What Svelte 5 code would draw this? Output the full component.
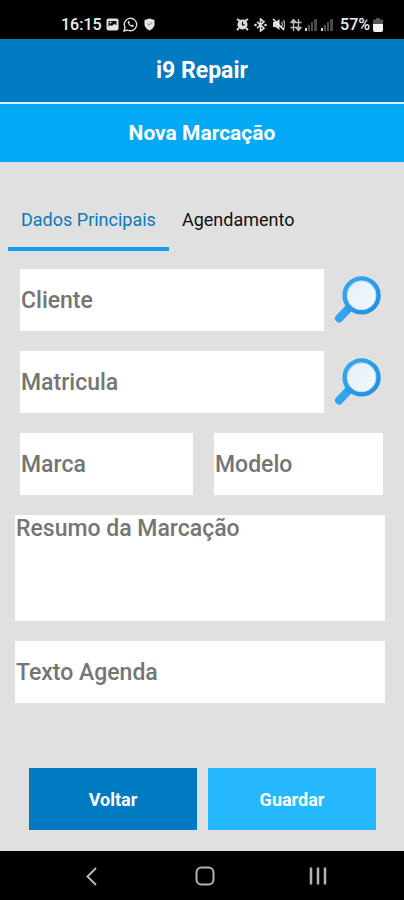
<script>
  const tabs = ['Dados Principais', 'Agendamento'];

  let activeTab = $state(0);
  let form = $state({
    cliente: '',
    matricula: '',
    marca: '',
    modelo: '',
    resumo: '',
    agenda: ''
  });
</script>

{#snippet magnifier()}
  <svg viewBox="0 0 48 48" aria-hidden="true">
    <defs>
      <linearGradient id="rim" x1="0" y1="0" x2="1" y2="1">
        <stop offset="0" stop-color="#37a8ee" />
        <stop offset="1" stop-color="#1f8fe0" />
      </linearGradient>
      <linearGradient id="lens" x1="0" y1="0" x2="1" y2="1">
        <stop offset="0" stop-color="#e2edf9" />
        <stop offset="1" stop-color="#f5f9fe" />
      </linearGradient>
    </defs>
    <path d="M15 31 L5 41.5" stroke="#36a3f0" stroke-width="8" stroke-linecap="round" />
    <path d="M17 29 L13 33" stroke="#2490e2" stroke-width="7" />
    <circle cx="27" cy="19" r="16.500" fill="url(#lens)" stroke="url(#rim)" stroke-width="4.500" />
    <circle cx="27" cy="19" r="14" fill="none" stroke="#b9daf5" stroke-width="1" />
  </svg>
{/snippet}

<div class="screen">
  <div class="status-bar">
    <div class="status-group">
      <span class="clock">16:15</span>
      <svg width="13" height="13" viewBox="0 0 13 13">
        <rect x="0.5" y="0.5" width="12" height="12" rx="2" fill="#e4e4e4" />
        <path d="M2.5 3h8v4L8 6 6 8 4 7 2.5 9z" fill="#111" />
        <circle cx="4.5" cy="4.5" r="1" fill="#e4e4e4" />
      </svg>
      <svg width="15" height="15" viewBox="0 0 15 15">
        <path d="M1 14l1-3.6A6.2 6.2 0 1 1 4.600 13z" fill="none" stroke="#ddd" stroke-width="1.400" />
        <path d="M5 4.200c-1.400 1.800 2.600 6.600 5.400 5.600l.4-1.500-1.700-.8-.8.8c-1-.4-1.700-1.200-2-2l.6-.8-.7-1.600z" fill="#ddd" />
      </svg>
      <svg class="spaced" width="11" height="13" viewBox="0 0 11 13">
        <path d="M5.500 0.500L10.500 2v4.500c0 2.500-2.500 4.800-5 6-2.500-1.200-5-3.500-5-6V2z" fill="#e4e4e4" />
        <path d="M3.500 5.500l1.700 1.700 3-3.200" fill="none" stroke="#777" stroke-width="1" />
      </svg>
    </div>
    <div class="status-group">
      <svg width="13" height="13" viewBox="0 0 13 13">
        <path d="M1 1l3 2M12 1L9 3M1 12l2-2M12 12l-2-2" stroke="#ddd" stroke-width="2" />
        <circle cx="6.500" cy="6.500" r="5" fill="#ddd" />
        <path d="M6.500 3.800v3h2.300" fill="none" stroke="#111" stroke-width="1.200" />
      </svg>
      <svg class="spaced" width="13" height="14" viewBox="0 0 13 14">
        <path d="M3 3.800l7 6.400L6.500 13V1L10 3.800 3 10.200" fill="none" stroke="#ddd" stroke-width="1.600" />
        <circle cx="1.500" cy="7" r="1.300" fill="#ddd" />
        <circle cx="11.500" cy="7" r="1.300" fill="#ddd" />
      </svg>
      <svg class="spaced" width="13" height="13" viewBox="0 0 13 13">
        <path d="M1 4h2.500L7.500 1v11L3.500 9H1z" fill="#ddd" />
        <path d="M9.500 4c1 1.500 1 3.500 0 5M11.500 2c1.300 2.500 1.300 6.500 0 9" fill="none" stroke="#aaa" stroke-width="1.400" />
        <path d="M1 1l11 11" stroke="#eee" stroke-width="1.600" />
      </svg>
      <svg class="spaced" width="12" height="14" viewBox="0 0 12 14">
        <path d="M3.500 13V2M8.500 1v11M1.200 4l2.300-2.500L5.800 4M6.200 10l2.300 2.500 2.300-2.500M0.500 4.500h11M0.500 9.500h11" fill="none" stroke="#bbb" stroke-width="1.300" />
      </svg>
      {#each [0, 1] as sim (sim)}
        <svg width="13" height="13" viewBox="0 0 13 13">
          <rect x="0" y="10" width="2" height="3" fill="#ddd" />
          <rect x="3" y="7" width="2" height="6" fill="#555" />
          <rect x="6" y="4" width="2" height="9" fill="#4d4d4d" />
          <rect x="9" y="1" width="3" height="12" fill="#484848" />
        </svg>
      {/each}
      <span class="battery">57%</span>
      <svg width="10" height="14" viewBox="0 0 10 14">
        <path d="M3 0h4v1.500h3V7H0V1.500h3z" fill="#555" />
        <path d="M0 6h10v6a2 2 0 0 1-2 2H2a2 2 0 0 1-2-2z" fill="#f4f4f4" />
      </svg>
    </div>
  </div>

  <header class="app-bar">
    <h1>i9 Repair</h1>
  </header>
  <div class="title-bar">
    <h2>Nova Marcação</h2>
  </div>

  <main>
    <div class="tabs" role="tablist">
      {#each tabs as tab, i (tab)}
        <button
          class="tab"
          class:active={activeTab === i}
          role="tab"
          aria-selected={activeTab === i}
          onclick={() => (activeTab = i)}
        >
          {tab}
        </button>
      {/each}
    </div>

    <form onsubmit={(e) => e.preventDefault()}>
      <div class="row search-row">
        <input type="text" placeholder="Cliente" aria-label="Cliente" bind:value={form.cliente} />
        <button type="button" class="search" aria-label="Procurar cliente">{@render magnifier()}</button>
      </div>
      <div class="row search-row">
        <input type="text" placeholder="Matricula" aria-label="Matricula" bind:value={form.matricula} />
        <button type="button" class="search" aria-label="Procurar matricula">{@render magnifier()}</button>
      </div>
      <div class="row pair">
        <input type="text" placeholder="Marca" aria-label="Marca" bind:value={form.marca} />
        <input type="text" placeholder="Modelo" aria-label="Modelo" bind:value={form.modelo} />
      </div>
      <textarea placeholder="Resumo da Marcação" aria-label="Resumo da Marcação" bind:value={form.resumo}></textarea>
      <input type="text" placeholder="Texto Agenda" aria-label="Texto Agenda" bind:value={form.agenda} />

      <div class="actions">
        <button type="button" class="btn back">Voltar</button>
        <button type="submit" class="btn save">Guardar</button>
      </div>
    </form>
  </main>

  <nav class="nav-bar">
    <button aria-label="Voltar atrás">
      <svg width="20" height="20" viewBox="0 0 20 20">
        <path d="M14 2L5.500 10.500 14 19" fill="none" stroke="#b4b4b4" stroke-width="2" />
      </svg>
    </button>
    <button aria-label="Início">
      <svg width="20" height="20" viewBox="0 0 20 20">
        <rect x="1.500" y="1.500" width="17" height="17" rx="5" fill="none" stroke="#b4b4b4" stroke-width="2" />
      </svg>
    </button>
    <button aria-label="Recentes">
      <svg width="20" height="20" viewBox="0 0 20 20">
        <path d="M3 1.500v17M10 1.500v17M17 1.500v17" stroke="#b4b4b4" stroke-width="2.500" />
      </svg>
    </button>
  </nav>
</div>

<style>
  :global(body) {
    margin: 0;
    background: #e0e0e0;
  }

  .screen {
    display: flex;
    flex-direction: column;
    min-height: 100vh;
    background: #e0e0e0;
    font-family: Roboto, 'Noto Sans', sans-serif;
  }

  button,
  input,
  textarea {
    box-sizing: border-box;
    margin: 0;
    border: 0;
    border-radius: 0;
    font-family: inherit;
  }

  button {
    padding: 0;
    background: none;
    cursor: pointer;
  }

  svg {
    display: block;
    flex: none;
  }

  .status-bar {
    display: flex;
    align-items: center;
    justify-content: space-between;
    height: 39px;
    padding: 10px 21px 0 61px;
    box-sizing: border-box;
    background: #000;
    color: #eee;
    font-size: 16px;
    font-weight: 500;
    line-height: 20px;
  }

  .status-group {
    display: flex;
    align-items: center;
    gap: 4px;
  }

  .status-group:last-child {
    gap: 3px;
  }

  .spaced {
    margin-left: 2px;
  }

  .battery {
    margin-left: 3px;
  }

  .app-bar,
  .title-bar {
    display: flex;
    align-items: center;
    justify-content: center;
    color: #fff;
  }

  .app-bar {
    height: 63px;
    background: #007ac1;
    border-bottom: 2px solid #d9effb;
  }

  .title-bar {
    height: 58px;
    background: #03a9f4;
  }

  h1,
  h2 {
    margin: 0;
    font-size: 23px;
    font-weight: 700;
    line-height: 28px;
  }

  h2 {
    font-size: 21px;
  }

  main {
    flex: 1;
    padding: 29px 19px 21px 15px;
  }

  .tabs {
    display: flex;
    margin-left: -7px;
  }

  .tab {
    height: 60px;
    padding: 0 13px;
    border-bottom: 4px solid transparent;
    color: #111;
    font-size: 18px;
  }

  .tab.active {
    border-bottom-color: #129eea;
    color: #0f77bd;
  }

  form {
    display: flex;
    flex-direction: column;
    gap: 20px;
    margin-top: 18px;
  }

  .row {
    padding: 0 2px 0 5px;
  }

  .search-row {
    display: flex;
    align-items: center;
    gap: 10px;
  }

  .search-row input {
    flex: 1;
  }

  .pair {
    display: grid;
    grid-template-columns: 43fr 42fr;
    gap: 21px;
  }

  .search {
    width: 49px;
    height: 49px;
  }

  .search svg {
    width: 100%;
  }

  input,
  textarea {
    width: 100%;
    min-width: 0;
    padding: 0 1px;
    background: #fff;
    color: #333;
    font-size: 23px;
    font-weight: 500;
    line-height: 28px;
  }

  input {
    height: 62px;
  }

  textarea {
    display: block;
    height: 106px;
    resize: none;
  }

  input::placeholder,
  textarea::placeholder {
    color: #757575;
    opacity: 1;
  }

  .actions {
    display: flex;
    gap: 11px;
    margin-top: 45px;
    padding: 0 9px 0 14px;
  }

  .btn {
    flex: 1;
    height: 62px;
    color: #fff;
    font-size: 18px;
    font-weight: 700;
  }

  .back {
    background: #007ac1;
  }

  .save {
    background: #26b8ff;
  }

  .nav-bar {
    display: flex;
    align-items: center;
    justify-content: space-between;
    height: 49px;
    padding: 0 76px 0 82px;
    background: #000;
  }
</style>
